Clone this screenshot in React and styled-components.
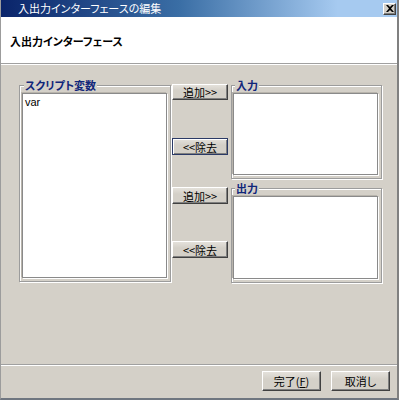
import styled, { createGlobalStyle } from "styled-components";

const Global = createGlobalStyle`
  html, body { margin: 0; padding: 0; background: #ffffff; }
  body {
    font-family: "Noto Sans CJK JP", "Liberation Sans", sans-serif;
    font-size: 12px;
    font-feature-settings: "palt";
  }
`;

const Window = styled.div`
  width: 399px;
  height: 400px;
  box-sizing: border-box;
  display: flex;
  flex-direction: column;
  background: #d4d0c8;
  border-left: 1px solid #9c9c9c;
  border-right: 2px solid #808080;
  border-bottom: 2px solid #6f7680;
`;

const TitleBar = styled.div`
  height: 17px;
  flex: none;
  display: flex;
  align-items: center;
  justify-content: space-between;
  padding: 0 1px 0 17px;
  background: linear-gradient(to right, #0a246a 0%, #3a6ea5 45%, #a6caf0 85%, #a6caf0 100%);
  color: #ffffff;
  font-size: 11px;
  line-height: 17px;
`;

const CloseBox = styled.div`
  width: 13px;
  height: 12px;
  box-sizing: border-box;
  background: #d4d0c8;
  border: 1px solid;
  border-color: #ffffff #404040 #404040 #ffffff;
  box-shadow: inset -1px -1px #808080;
  display: flex;
  align-items: center;
  justify-content: center;
`;

const Header = styled.div`
  height: 46px;
  flex: none;
  background: #ffffff;
  display: flex;
  align-items: center;
  padding: 2px 0 0 9px;
  box-sizing: border-box;
  font-weight: bold;
  font-size: 11px;
  color: #000000;
`;

const Rule = styled.div`
  height: 0;
  flex: none;
  border-top: 1px solid #a0a0a0;
  border-bottom: 1px solid #ffffff;
`;

const Body = styled.div`
  flex: 1;
  display: flex;
  gap: 1px;
  padding: 13px 0 0 18px;
`;

const Group = styled.fieldset`
  margin: 0;
  padding: ${(p) => p.$pad || "1px 3px 3px 1px"};
  width: ${(p) => p.$w}px;
  height: ${(p) => p.$h}px;
  box-sizing: border-box;
  border: 1px solid #9c9c9c;
  box-shadow: 1px 1px 0 #ffffff, inset 1px 1px 0 #ffffff;
  display: flex;
  flex-direction: column;
  min-width: 0;
`;

const Legend = styled.legend`
  padding: 0 1px;
  margin-left: 2px;
  color: #10267a;
  font-weight: bold;
  font-size: 11px;
  line-height: 14px;
  background: #d4d0c8;
`;

const ListBox = styled.div`
  flex: 1;
  background: #ffffff;
  border: 1px solid #8a8a8a;
  box-shadow: 1px 1px 0 #ffffff, -1px -1px 0 #b8b4ac;
  padding: 2px 2px;
  font-family: "Liberation Sans", "Noto Sans CJK JP", sans-serif;
  font-size: 11px;
  line-height: 12px;
  color: #000000;
`;

const RightSide = styled.div`
  display: flex;
  flex-direction: column;
  gap: 2px;
`;

const Row = styled.div`
  display: flex;
  gap: 3px;
`;

const ButtonStack = styled.div`
  width: 56px;
  display: flex;
  flex-direction: column;
  gap: ${(p) => p.$gap}px;
  padding-top: 6px;
`;

const Button = styled.button`
  width: ${(p) => p.$w || 56}px;
  height: ${(p) => p.$h || 16}px;
  box-sizing: border-box;
  margin: 0;
  padding: 0;
  background: linear-gradient(#e4e1db, #d4d0c8 40%);
  border: 1px solid;
  border-color: ${(p) => (p.$focus ? "#2b3a66" : "#ffffff #404040 #404040 #ffffff")};
  box-shadow: ${(p) =>
    p.$focus ? "inset 1px 1px #ffffff, inset -1px -1px #808080" : "inset -1px -1px #808080"};
  font-family: "Noto Sans CJK JP", "Liberation Sans", sans-serif;
  font-feature-settings: "palt";
  font-size: 11px;
  line-height: 12px;
  color: #000000;
`;

const Footer = styled.div`
  flex: none;
  display: flex;
  justify-content: flex-end;
  gap: 10px;
  padding: 5px 7px 7px 0;
`;

export default function App() {
  return (
    <>
      <Global />
      <Window>
        <TitleBar>
          <span>入出力インターフェースの編集</span>
          <CloseBox>
            <svg width="8" height="7" viewBox="0 0 8 7">
              <path d="M0 0h2l2 2 2-2h2L5 3.5 8 7H6L4 5 2 7H0l3-3.5z" fill="#000" />
            </svg>
          </CloseBox>
        </TitleBar>
        <Header>入出力インターフェース</Header>
        <Rule />
        <Body>
          <Group $w={152} $h={204} $pad="1px 3px 3px 2px">
            <Legend>スクリプト変数</Legend>
            <ListBox>var</ListBox>
          </Group>
          <RightSide>
            <Row>
              <ButtonStack $gap={38}>
                <Button>追加&gt;&gt;</Button>
                <Button $focus $h={17}>&lt;&lt;除去</Button>
              </ButtonStack>
              <Group $w={151} $h={101}>
                <Legend>入力</Legend>
                <ListBox />
              </Group>
            </Row>
            <Row>
              <ButtonStack $gap={37}>
                <Button $h={17}>追加&gt;&gt;</Button>
                <Button $h={17}>&lt;&lt;除去</Button>
              </ButtonStack>
              <Group $w={151} $h={102}>
                <Legend>出力</Legend>
                <ListBox />
              </Group>
            </Row>
          </RightSide>
        </Body>
        <Rule />
        <Footer>
          <Button $w={59} $h={20}>完了(<u>F</u>)</Button>
          <Button $w={59} $h={20}>取消し</Button>
        </Footer>
      </Window>
    </>
  );
}
